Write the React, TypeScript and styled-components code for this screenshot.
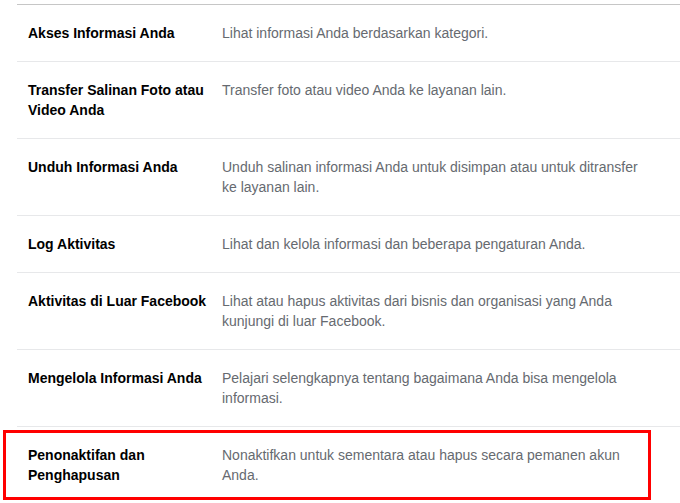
import { createGlobalStyle } from 'styled-components'
import styled from 'styled-components'

type Item = { title: string; description: string; highlighted?: boolean }

const items: Item[] = [
  { title: 'Akses Informasi Anda', description: 'Lihat informasi Anda berdasarkan kategori.' },
  { title: 'Transfer Salinan Foto atau Video Anda', description: 'Transfer foto atau video Anda ke layanan lain.' },
  {
    title: 'Unduh Informasi Anda',
    description: 'Unduh salinan informasi Anda untuk disimpan atau untuk ditransfer ke layanan lain.',
  },
  { title: 'Log Aktivitas', description: 'Lihat dan kelola informasi dan beberapa pengaturan Anda.' },
  {
    title: 'Aktivitas di Luar Facebook',
    description: 'Lihat atau hapus aktivitas dari bisnis dan organisasi yang Anda kunjungi di luar Facebook.',
  },
  {
    title: 'Mengelola Informasi Anda',
    description: 'Pelajari selengkapnya tentang bagaimana Anda bisa mengelola informasi.',
  },
  {
    title: 'Penonaktifan dan Penghapusan',
    description: 'Nonaktifkan untuk sementara atau hapus secara pemanen akun Anda.',
    highlighted: true,
  },
]

export default function App() {
  return (
    <>
      <GlobalStyle />
      <List>
        {items.map((item) => (
          <Row key={item.title}>
            <Title $narrow={item.highlighted}>{item.title}</Title>
            <Description>{item.description}</Description>
            {item.highlighted && <Highlight />}
          </Row>
        ))}
      </List>
    </>
  )
}

const GlobalStyle = createGlobalStyle`
  html, body {
    margin: 0;
    padding: 0;
    background: #ffffff;
    overflow: hidden;
  }
  body {
    font-family: "Liberation Sans", Arial, sans-serif;
  }
`

const List = styled.div`
  margin: 4px 0 0 17px;
  border-top: 1px solid #c6c6c6;
`

const Row = styled.div`
  position: relative;
  display: flex;
  align-items: flex-start;
  padding: 18px 0 18px 11px;
  border-bottom: 1px solid #e7e8ea;
  line-height: 20px;
  font-size: 14px;
`

const Title = styled.div<{ $narrow?: boolean }>`
  flex: 0 0 ${({ $narrow }) => ($narrow ? '160px' : '190px')};
  margin-right: ${({ $narrow }) => ($narrow ? '34px' : '4px')};
  font-weight: bold;
  color: #000000;
`

const Description = styled.div`
  width: 430px;
  color: #666a70;
`

const Highlight = styled.div`
  position: absolute;
  left: -14px;
  top: 3px;
  width: 642px;
  height: 64px;
  border: 3px solid #ff0000;
  pointer-events: none;
`
